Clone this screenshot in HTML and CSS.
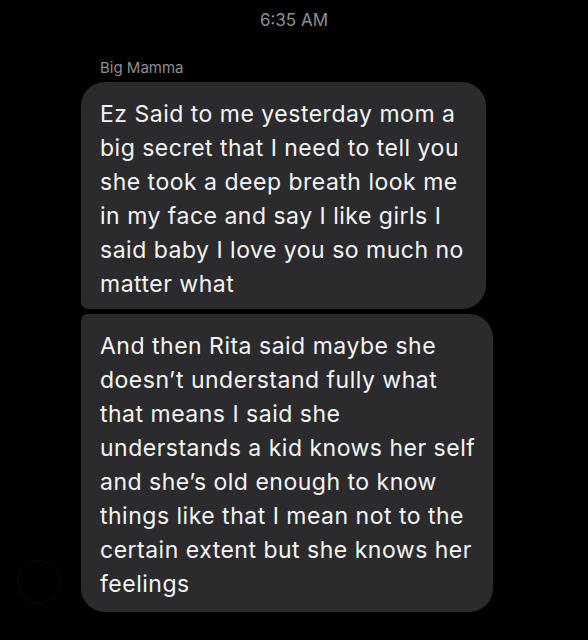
FILE: index.html
```html
<!DOCTYPE html>
<html lang="en">
<head>
  <meta charset="UTF-8">
  <meta name="viewport" content="width=device-width, initial-scale=1.0">
  <link rel="stylesheet" href="styles.css">
  <title>Messages</title>
</head>
<body>
  <div class="chat">
    <div class="time">6:35 AM</div>
    <div class="sender">Big Mamma</div>
    <div class="thread">
      <div class="avatar"></div>
      <div class="bubbles">
        <div class="bubble first">Ez Said to me yesterday mom a<br>big secret that I need to tell you<br>she took a deep breath look me<br>in my face and say I like girls I<br>said baby I love you so much no<br>matter what</div>
        <div class="bubble last">And then Rita said maybe she<br>doesn’t understand fully what<br>that means I said she<br>understands a kid knows her self<br>and she’s old enough to know<br>things like that I mean not to the<br>certain extent but she knows her<br>feelings</div>
      </div>
    </div>
  </div>
</body>
</html>
```

FILE: styles.css
```css
body{
  margin: 0;
  background-color: #000;
  font-family: Inter, "Liberation Sans", sans-serif;
}
.chat{
  height: 640px;
  overflow: hidden;
}
.time{
  text-align: center;
  color: #8e8e93;
  font-size: 17px;
  padding-top: 10px;
  height: 24px;
}
.sender{
  color: #8e8e93;
  font-size: 15px;
  margin-left: 100px;
  margin-top: 24px;
  height: 24px;
}
.thread{
  display: flex;
  align-items: flex-end;
}
.avatar{
  width: 44px;
  height: 44px;
  margin-left: 17px;
  margin-right: 20px;
  margin-bottom: 8px;
  border-radius: 50%;
  border: 1px solid #0c0c0c;
  box-sizing: border-box;
}
.bubbles{
  display: flex;
  flex-direction: column;
  align-items: flex-start;
  gap: 5px;
}
.bubble{
  background-color: #2b2b2d;
  color: #f5f5f7;
  font-size: 23px;
  letter-spacing: 0.5px;
  line-height: 34px;
  padding: 15px 19px 8px;
  border-radius: 24px;
  white-space: nowrap;
}
.bubble.first{
  border-bottom-left-radius: 7px;
  width: 367px;
}
.bubble.last{
  border-top-left-radius: 7px;
  width: 374px;
  padding-top: 15px;
  padding-bottom: 11px;
}
```
